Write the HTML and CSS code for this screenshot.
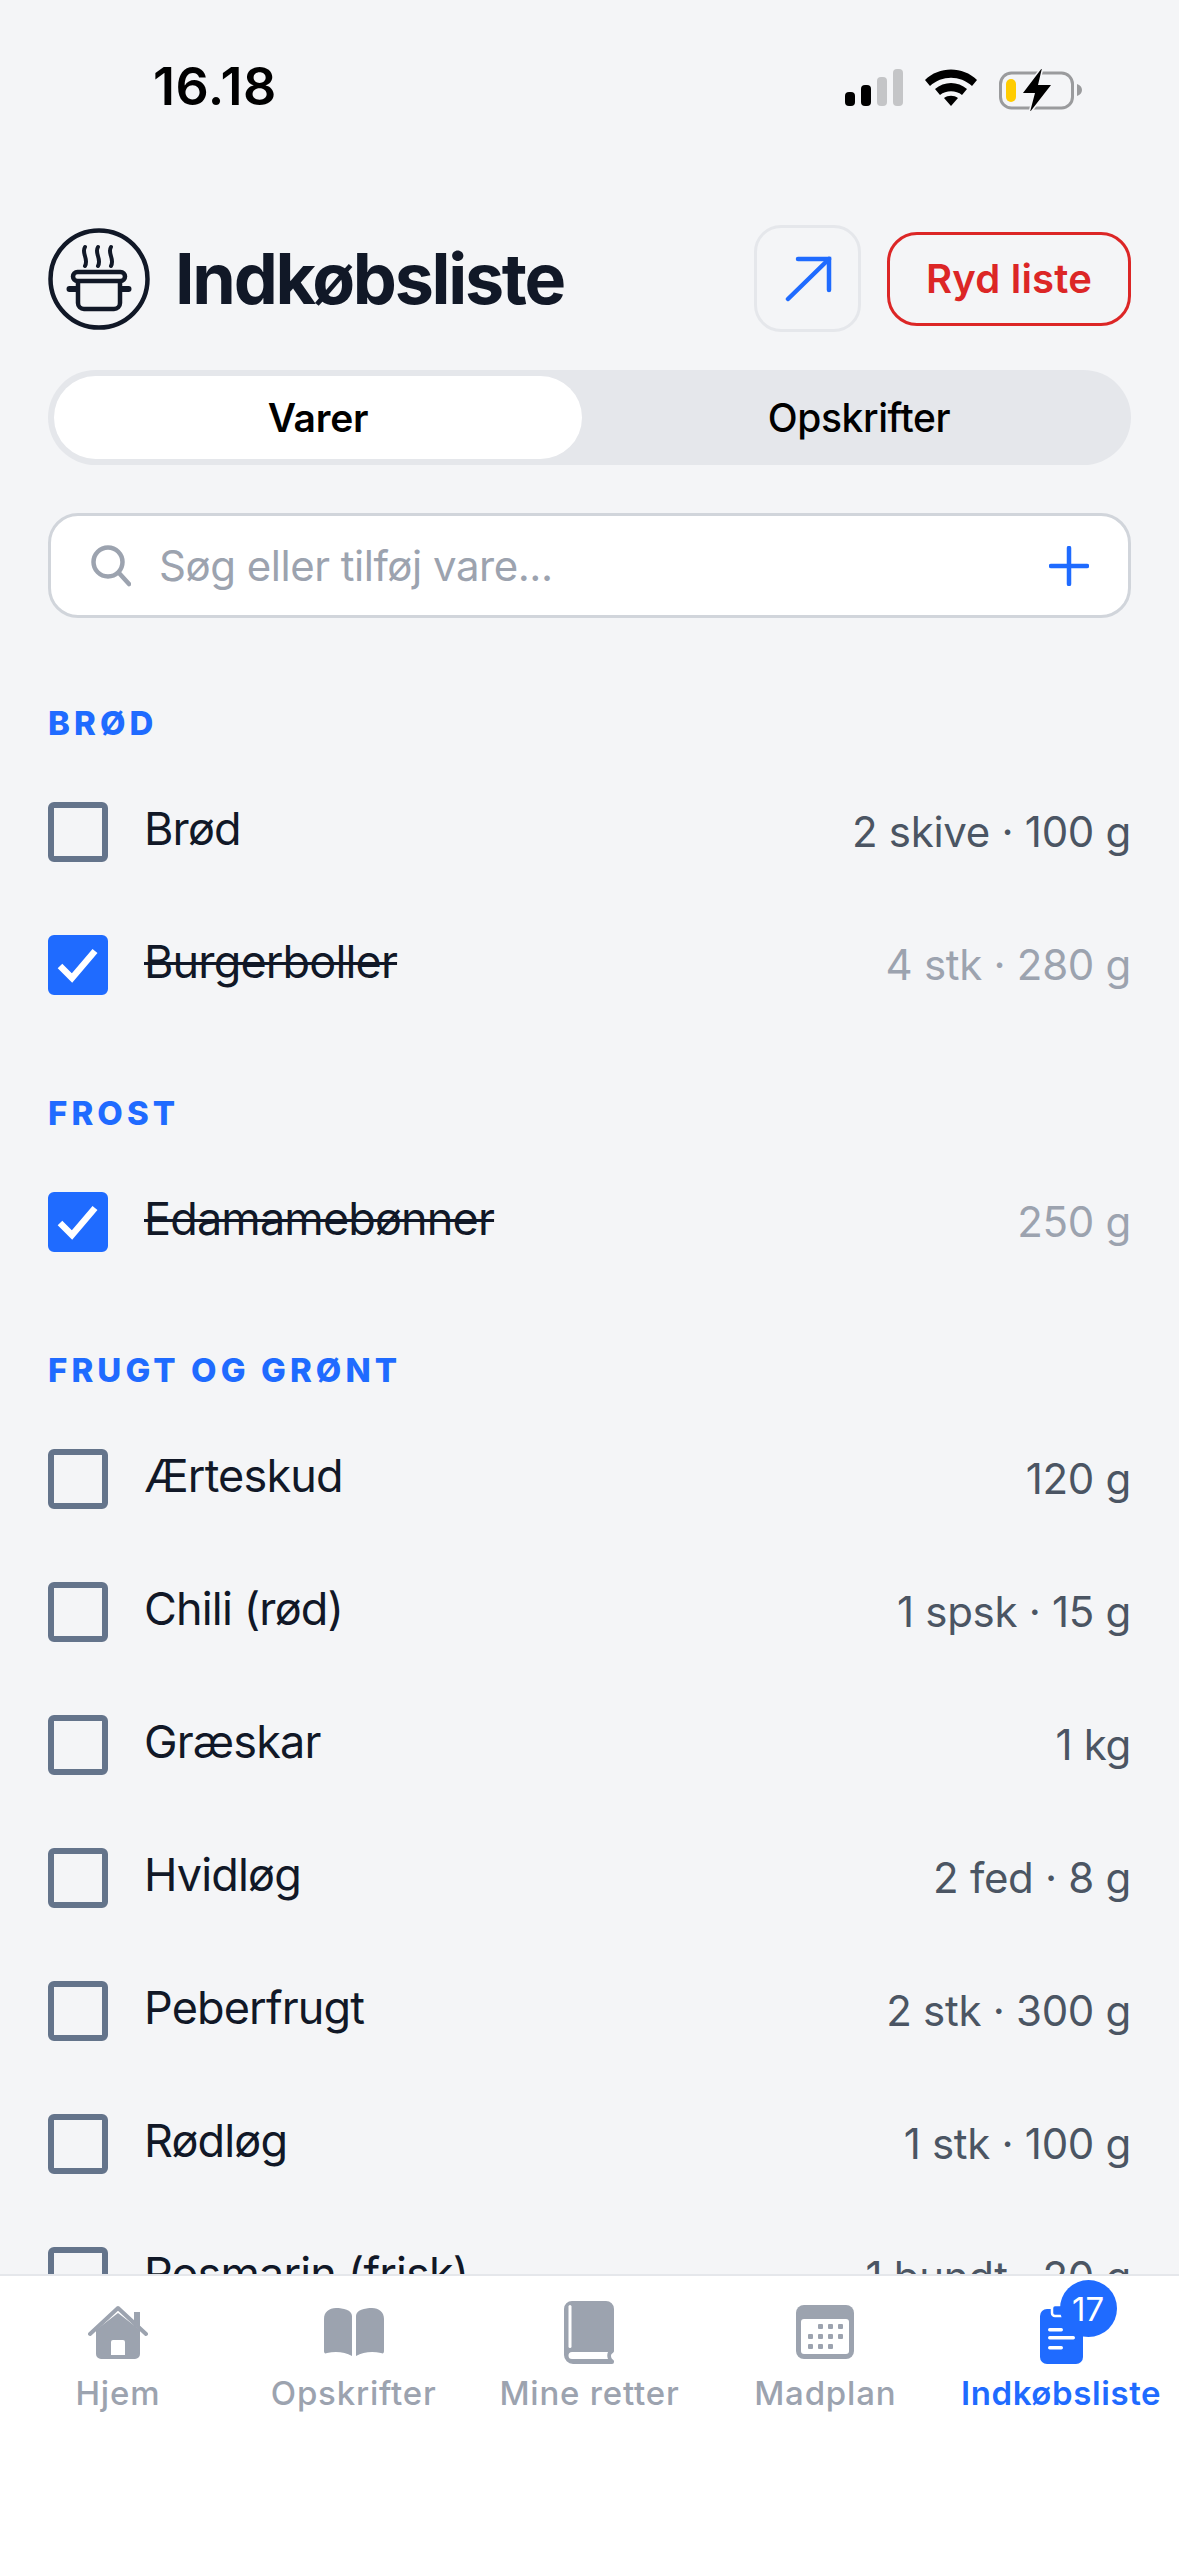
FILE: index.html
```html
<!DOCTYPE html>
<html lang="da">
<head>
<meta charset="utf-8">
<title>Indkøbsliste</title>
<link rel="stylesheet" href="styles.css">
</head>
<body>
<div class="app">
  <div class="status">
    <span class="time">16.18</span>
    <div class="status-icons">
      <svg width="58" height="38" viewBox="0 0 58 38"><rect x="0" y="23" width="10" height="14" rx="4" fill="#000"/><rect x="16" y="16" width="10" height="21" rx="4" fill="#000"/><rect x="32" y="8" width="10" height="29" rx="4" fill="#c4c5c7"/><rect x="48" y="0" width="10" height="37" rx="4" fill="#c4c5c7"/></svg>
      <svg width="52" height="38" viewBox="0 0 52 38"><path d="M0 11C14-3 38-3 52 11l-5 6C35 6 17 6 5 17Z M10 20c9-8 23-8 32 0l-5 6c-6-5-16-5-22 0Z M19 29c4-3 10-3 14 0l-7 8Z" fill="#000"/></svg>
      <svg width="84" height="42" viewBox="0 0 84 42"><rect x="1.5" y="4" width="72" height="35" rx="11" fill="none" stroke="#9a9b9d" stroke-width="3"/><rect x="7" y="10" width="10" height="23" rx="5" fill="#ffcc00"/><path d="M78 15c3 1 5 3 5 6s-2 5-5 6Z" fill="#9a9b9d"/><path d="M43-1 24 24h12l-5 19 21-27H39Z" fill="#000" stroke="#f4f5f7" stroke-width="3" paint-order="stroke"/></svg>
    </div>
  </div>

  <header class="header">
    <svg class="logo" width="102" height="102" viewBox="0 0 102 102" fill="none" stroke="#111827" stroke-width="4.500" stroke-linecap="round" stroke-linejoin="round">
      <circle cx="51" cy="51" r="48.500"/>
      <path d="M37 19C33 25 41 31 37 38M50 19C46 25 54 31 50 38M63 19C59 25 67 31 63 38" stroke-width="4"/>
      <rect x="25" y="44" width="52" height="9" rx="4.500"/>
      <path d="M30 54v21a6 6 0 0 0 6 6h30a6 6 0 0 0 6-6V54"/>
      <path d="M21.500 61H28M74 61h6.500" stroke-width="6"/>
    </svg>
    <h1 class="title">Indkøbsliste</h1>
    <div class="actions">
      <button class="icon-btn" type="button">
        <svg width="48" height="48" viewBox="0 0 48 48" fill="none" stroke="#1f6bff" stroke-width="4.500" stroke-linecap="round"><path d="M4 44 45 4"/><path d="M14 4h31v31" stroke-linejoin="miter"/></svg>
      </button>
      <button class="clear-btn" type="button">Ryd liste</button>
    </div>
  </header>

  <div class="tabs">
    <div class="tab tab-active">Varer</div>
    <div class="tab tab-idle">Opskrifter</div>
  </div>

  <div class="search">
    <svg width="40" height="42" viewBox="0 0 40 42" fill="none" stroke="#9ca3af" stroke-width="4.500" stroke-linecap="round"><circle cx="17" cy="17" r="14.500"/><path d="M28 28l10 11"/></svg>
    <span class="placeholder">Søg eller tilføj vare...</span>
    <svg class="plus" width="40" height="40" viewBox="0 0 40 40" fill="none" stroke="#1f6bff" stroke-width="4.500" stroke-linecap="round"><path d="M20 2v36M2 20h36"/></svg>
  </div>

  <main class="list">
    <section class="group">
      <h2 class="group-title">BRØD</h2>
      <div class="row"><span class="box"></span><span class="name">Brød</span><span class="qty">2 skive · 100 g</span></div>
      <div class="row row-done"><span class="box box-done"><svg width="42" height="36" viewBox="0 0 42 36" fill="none" stroke="#fff" stroke-width="6.500"><path d="M3 19l12 12L38 4"/></svg></span><span class="name">Burgerboller</span><span class="qty">4 stk · 280 g</span></div>
    </section>
    <section class="group">
      <h2 class="group-title">FROST</h2>
      <div class="row row-done"><span class="box box-done"><svg width="42" height="36" viewBox="0 0 42 36" fill="none" stroke="#fff" stroke-width="6.500"><path d="M3 19l12 12L38 4"/></svg></span><span class="name">Edamamebønner</span><span class="qty">250 g</span></div>
    </section>
    <section class="group">
      <h2 class="group-title">FRUGT OG GRØNT</h2>
      <div class="row"><span class="box"></span><span class="name">Ærteskud</span><span class="qty">120 g</span></div>
      <div class="row"><span class="box"></span><span class="name">Chili (rød)</span><span class="qty">1 spsk · 15 g</span></div>
      <div class="row"><span class="box"></span><span class="name">Græskar</span><span class="qty">1 kg</span></div>
      <div class="row"><span class="box"></span><span class="name">Hvidløg</span><span class="qty">2 fed · 8 g</span></div>
      <div class="row"><span class="box"></span><span class="name">Peberfrugt</span><span class="qty">2 stk · 300 g</span></div>
      <div class="row"><span class="box"></span><span class="name">Rødløg</span><span class="qty">1 stk · 100 g</span></div>
      <div class="row"><span class="box"></span><span class="name">Rosmarin (frisk)</span><span class="qty">1 bundt · 20 g</span></div>
    </section>
  </main>

  <nav class="nav">
    <div class="nav-item">
      <div class="nav-icon"><svg width="60" height="54" viewBox="0 0 60 54" fill="#9ca3af"><path d="M8 25 30 8l22 17v24a5 5 0 0 1-5 5H13a5 5 0 0 1-5-5Z M23 50h14V37a2 2 0 0 0-2-2H25a2 2 0 0 0-2 2Z" fill-rule="evenodd"/><path d="M2 29 30 3l28 26" fill="none" stroke="#9ca3af" stroke-width="4" stroke-linecap="round" stroke-linejoin="round"/><rect x="46" y="7" width="6" height="15"/></svg></div>
      <span class="nav-label">Hjem</span>
    </div>
    <div class="nav-item">
      <div class="nav-icon"><svg width="60" height="48" viewBox="0 0 60 48" fill="#9ca3af"><path d="M28 8v40c-7-4-16-5-25-3-2 1-3 0-3-2V11C0 4 5 0 12 0c7 0 16 2 16 8Z M32 8v40c7-4 16-5 25-3 2 1 3 0 3-2V11c0-7-5-11-12-11-7 0-16 2-16 8Z"/></svg></div>
      <span class="nav-label">Opskrifter</span>
    </div>
    <div class="nav-item">
      <div class="nav-icon"><svg width="50" height="63" viewBox="0 0 50 63"><path d="M8 0h34a8 8 0 0 1 8 8v42c0 2-3 2-3 5s3 4 3 5v1a2 2 0 0 1-2 2H9a9 9 0 0 1-9-9V8a8 8 0 0 1 8-8Z" fill="#9ca3af"/><path d="M6 5.500v40" stroke="#fff" stroke-width="3" stroke-linecap="round" fill="none"/><path d="M8 51h36c-1 2-1 5 0 7H8a3.500 3.500 0 0 1 0-7Z" fill="#fff"/></svg></div>
      <span class="nav-label">Mine retter</span>
    </div>
    <div class="nav-item">
      <div class="nav-icon"><svg width="58" height="54" viewBox="0 0 58 54"><rect width="58" height="54" rx="8" fill="#9ca3af"/><rect x="5" y="14" width="48" height="35" rx="3" fill="#fff"/><g fill="#9ca3af"><rect x="22" y="19" width="5" height="5" rx="1"/><rect x="32" y="19" width="5" height="5" rx="1"/><rect x="42" y="19" width="5" height="5" rx="1"/><rect x="12" y="29" width="5" height="5" rx="1"/><rect x="22" y="29" width="5" height="5" rx="1"/><rect x="32" y="29" width="5" height="5" rx="1"/><rect x="42" y="29" width="5" height="5" rx="1"/><rect x="12" y="39" width="5" height="5" rx="1"/><rect x="22" y="39" width="5" height="5" rx="1"/><rect x="32" y="39" width="5" height="5" rx="1"/></g></svg></div>
      <span class="nav-label">Madplan</span>
    </div>
    <div class="nav-item nav-item-active">
      <div class="nav-icon nav-icon-badge">
        <svg class="clipboard" width="43" height="55" viewBox="0 0 43 55" overflow="visible"><rect y="0" width="43" height="55" rx="7" fill="#1f6bff"/><rect x="12" y="-4" width="18" height="11" rx="3" fill="#1f6bff" stroke="#fff" stroke-width="2.500"/><g fill="#fff"><rect x="8" y="19" width="15" height="3.500" rx="1.700"/><rect x="8" y="27" width="27" height="3.500" rx="1.700"/><rect x="8" y="37" width="15" height="3.500" rx="1.700"/></g></svg>
        <span class="badge">17</span>
      </div>
      <span class="nav-label">Indkøbsliste</span>
    </div>
  </nav>
</div>
</body>
</html>
```

FILE: styles.css
```css
* { box-sizing: border-box; }
html, body { margin: 0; padding: 0; }
body { background: #f4f5f7; font-family: Inter, "Noto Sans", sans-serif; color: #111827; }
.app { width: 1179px; height: 2556px; display: flex; flex-direction: column; overflow: hidden; }

.status { height: 225px; flex: none; display: flex; align-items: flex-start; justify-content: space-between; padding: 61px 96px 0 153px; }
.time { font-size: 52px; font-weight: 600; line-height: 52px; color: #000; letter-spacing: 0.6px; }
.status-icons { display: flex; align-items: flex-start; gap: 22px; padding-top: 8px; }

.header { display: flex; align-items: center; height: 107px; flex: none; padding: 0 48px; }
.logo { flex: none; }
.title { margin: 0 0 0 25px; font-size: 70px; font-weight: 700; letter-spacing: -2.300px; line-height: 80px; color: #111827; }
.actions { margin-left: auto; display: flex; align-items: center; gap: 26px; }
.icon-btn { width: 107px; height: 107px; border: 3px solid #e5e7eb; border-radius: 27px; background: #f4f5f7; display: flex; align-items: center; justify-content: center; padding: 0; }
.clear-btn { width: 244px; height: 94px; border: 3px solid #dc2626; border-radius: 30px; background: transparent; color: #dc2626; font: 600 40px/1 Inter, sans-serif; letter-spacing: 0.2px; padding: 0; }

.tabs { margin: 38px 48px 0; height: 95px; flex: none; border-radius: 48px; background: #e5e7eb; padding: 6px; display: flex; }
.tab { flex: 1; display: flex; align-items: center; justify-content: center; font-size: 39px; font-weight: 500; letter-spacing: -0.4px; color: #000; border-radius: 42px; }
.tab-idle { padding-left: 11px; }
.tab-active { flex: none; width: 528px; background: #fff; font-weight: 600; letter-spacing: -0.2px; }

.search { margin: 48px 48px 0; height: 105px; flex: none; border: 3px solid #d1d5db; border-radius: 30px; background: #fff; display: flex; align-items: center; padding: 0 39px 0 40px; }
.placeholder { margin-left: 28px; font-size: 42px; color: #9ca3af; letter-spacing: -0.48px; }
.plus { margin-left: auto; }

.list { flex: 1; min-height: 0; overflow: hidden; padding: 85px 48px 0; }
.group { margin-bottom: 62px; }
.group-title { margin: 0 0 22px; height: 40px; font-size: 33px; line-height: 40px; font-weight: 800; letter-spacing: 4.100px; color: #1f6bff; }
.row { height: 133px; display: flex; align-items: center; }
.box { width: 60px; height: 60px; flex: none; border: 6px solid #64748b; border-radius: 6px; display: flex; align-items: center; justify-content: center; }
.box-done { background: #1f6bff; border-color: #1f6bff; }
.name { margin-left: 36px; font-size: 45px; letter-spacing: -0.85px; color: #111827; position: relative; top: -3px; }
.qty { margin-left: auto; font-size: 42px; letter-spacing: -0.3px; color: #4b5563; }
.row-done .name { text-decoration: line-through; text-decoration-thickness: 3px; }
.row-done .qty { color: #9ca3af; }

.nav { height: 282px; flex: none; background: #fff; border-top: 2px solid #e5e7eb; display: grid; grid-template-columns: repeat(5, 1fr); align-items: start; }
.nav-item { display: flex; flex-direction: column; align-items: center; padding-top: 23px; }
.nav-icon { height: 66px; display: flex; align-items: center; justify-content: center; position: relative; }
.clipboard { margin-top: 9px; }
.nav-label { margin-top: 8px; font-size: 33px; line-height: 40px; font-weight: 500; letter-spacing: 0.8px; color: #9ca3af; white-space: nowrap; }
.nav-item-active .nav-label { color: #1f6bff; font-weight: 600; letter-spacing: 0.6px; }
.badge { position: absolute; left: 20px; top: -19px; width: 57px; height: 57px; border-radius: 50%; background: #1f6bff; color: #fff; font-size: 33px; font-weight: 400; display: flex; align-items: center; justify-content: center; }
```
